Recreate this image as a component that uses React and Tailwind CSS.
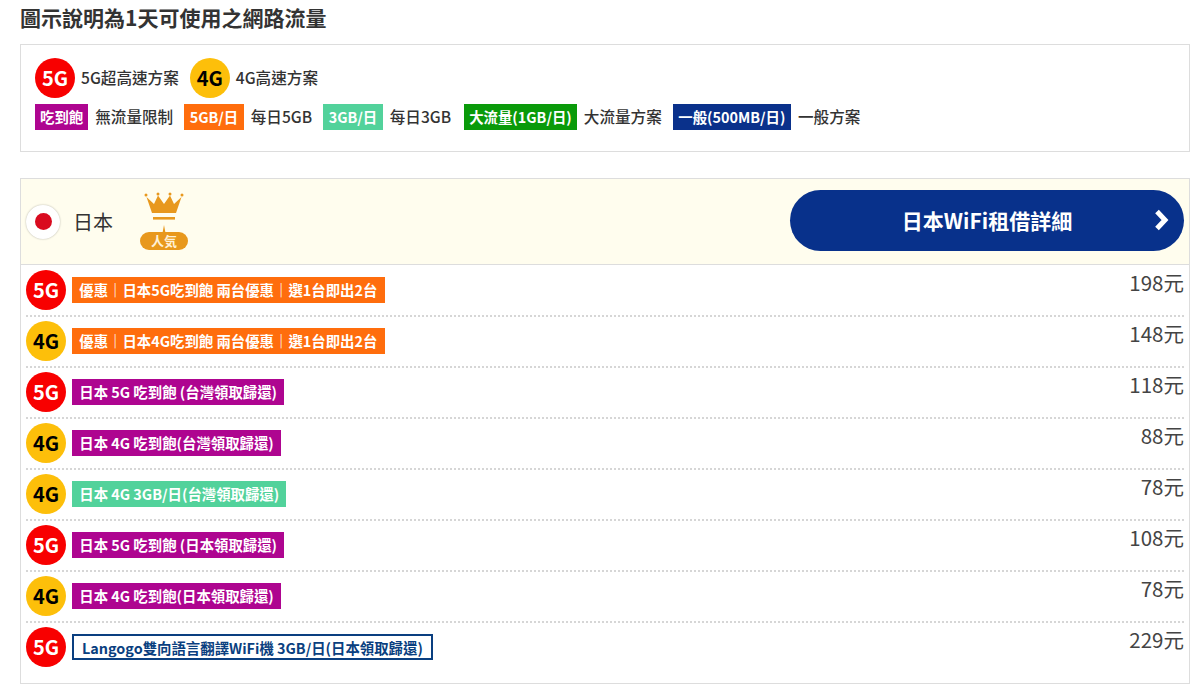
const font = { fontFamily: '"Noto Sans CJK TC", "Noto Sans", sans-serif' };

function Circle({ g }) {
  const five = g === "5G";
  return (
    <span className={`flex h-10 w-10 shrink-0 items-center justify-center rounded-full text-[20px] font-bold leading-none ${five ? "bg-[#f80000] text-white" : "bg-[#fdbf0a] text-black"}`}>
      {g}
    </span>
  );
}

function Tag({ className, children }) {
  return <span className={`flex h-[26px] items-center text-[14.4px] font-bold leading-none text-white ${className}`}>{children}</span>;
}

function Crown() {
  return (
    <svg width="48" height="60" viewBox="0 0 48 60" className="shrink-0">
      <g fill="#e8981d">
        <circle cx="6" cy="3" r="1.5" />
        <circle cx="18" cy="2" r="1.5" />
        <circle cx="30" cy="2" r="1.5" />
        <circle cx="42" cy="3" r="1.5" />
        <path d="M6.5 5 L14 12 L18 3.5 L24 12 L30 3.5 L34 12 L41.5 5 L36 21 L12 21 Z" />
        <rect x="13" y="25" width="22" height="2.6" />
        <path d="M22.5 41 L24 33 L25.5 41 Z" />
        <rect x="0" y="40" width="48" height="18" rx="9" />
      </g>
      <text x="24" y="54" textAnchor="middle" fontSize="13" fontWeight="700" fill="#fff1d6" style={font}>人気</text>
    </svg>
  );
}

const rows = [
  ["5G", "bg-[#ff6d0d]", "優惠｜日本5G吃到飽 兩台優惠｜選1台即出2台", "198元"],
  ["4G", "bg-[#ff6d0d]", "優惠｜日本4G吃到飽 兩台優惠｜選1台即出2台", "148元"],
  ["5G", "bg-[#ae0590]", "日本 5G 吃到飽 (台灣領取歸還)", "118元"],
  ["4G", "bg-[#ae0590]", "日本 4G 吃到飽(台灣領取歸還)", "88元"],
  ["4G", "bg-[#52d29b]", "日本 4G 3GB/日(台灣領取歸還)", "78元"],
  ["5G", "bg-[#ae0590]", "日本 5G 吃到飽 (日本領取歸還)", "108元"],
  ["4G", "bg-[#ae0590]", "日本 4G 吃到飽(日本領取歸還)", "78元"],
];

export default function App() {
  return (
    <div className="h-[693px] w-[1200px] overflow-hidden bg-white pl-5 pr-[10px] text-[#333]" style={font}>
      <h2 className="flex h-[44px] items-start pt-[3px] text-[21px] font-bold leading-[28px]">
        圖示說明為1天可使用之網路流量
      </h2>

      <div className="h-[108px] border border-[#ddd] px-[14px] pt-[13px] text-[15.6px] font-medium">
        <div className="flex h-10 items-center">
          <Circle g="5G" />
          <span className="ml-[6px]">5G超高速方案</span>
          <span className="ml-[11px]"><Circle g="4G" /></span>
          <span className="ml-[6px]">4G高速方案</span>
        </div>
        <div className="mt-[6px] flex items-center">
          <Tag className="bg-[#ae0590] px-[5px]">吃到飽</Tag>
          <span className="ml-[7px]">無流量限制</span>
          <Tag className="ml-[11px] bg-[#ff6d0d] px-[5.5px]">5GB/日</Tag>
          <span className="ml-[7px]">每日5GB</span>
          <Tag className="ml-[11px] bg-[#52d29b] px-[5.5px]">3GB/日</Tag>
          <span className="ml-[7px]">每日3GB</span>
          <Tag className="ml-[13px] bg-[#0a9a0a] px-[5px]">大流量(1GB/日)</Tag>
          <span className="ml-[7px]">大流量方案</span>
          <Tag className="ml-[11px] bg-[#0a318b] px-[5.5px]">一般(500MB/日)</Tag>
          <span className="ml-[7px]">一般方案</span>
        </div>
      </div>

      <div className="mt-[26px] h-[506px] border border-[#ddd]">
        <div className="flex h-[86px] items-center justify-between border-b border-[#ddd] bg-[#fffdee] px-[5px]">
          <div className="flex items-center">
            <span className="flex h-[34px] w-[34px] items-center justify-center rounded-full bg-white shadow-[0_0_2px_rgba(0,0,0,0.3)]">
              <span className="h-[17px] w-[17px] rounded-full bg-[#d90b1f]" />
            </span>
            <span className="ml-[13px] text-[20px] leading-none">日本</span>
            <span className="ml-[27px] mt-[1px]"><Crown /></span>
          </div>
          <a className="relative -mt-[2px] flex h-[61px] w-[394px] items-center justify-center rounded-full bg-[#08318b] text-[21px] font-bold text-white">
            日本WiFi租借詳細
            <svg width="18" height="24" viewBox="0 0 18 24" className="absolute right-[13px] top-[18px]">
              <path d="M4 3.5 L12 12 L4 20.5" fill="none" stroke="#fff" strokeWidth="5" />
            </svg>
          </a>
        </div>

        <div className="px-[5px] pt-[1px]">
          {rows.map(([g, c, t, p], i) => (
            <div key={i} className="flex h-[51px] items-center justify-between border-b-2 border-dotted border-[#d6d6d6]">
              <div className="-mt-[1px] flex items-center">
                <Circle g={g} />
                <Tag className={`ml-[6px] px-[7.25px] ${c}`}>{t}</Tag>
              </div>
              <span className="-mt-[17px] text-[20.5px] leading-none text-[#444]">{p}</span>
            </div>
          ))}
          <div className="flex h-[51px] items-center justify-between">
            <div className="-mt-[3px] flex items-center">
              <Circle g="5G" />
              <span className="ml-[6px] flex h-[26px] items-center border-2 border-[#0a3f80] px-[8px] pt-[3px] text-[14.4px] font-bold leading-none text-[#0a3f80]">Langogo雙向語言翻譯WiFi機 3GB/日(日本領取歸還)</span>
            </div>
            <span className="-mt-[19px] text-[20.5px] leading-none text-[#444]">229元</span>
          </div>
        </div>
      </div>
    </div>
  );
}
